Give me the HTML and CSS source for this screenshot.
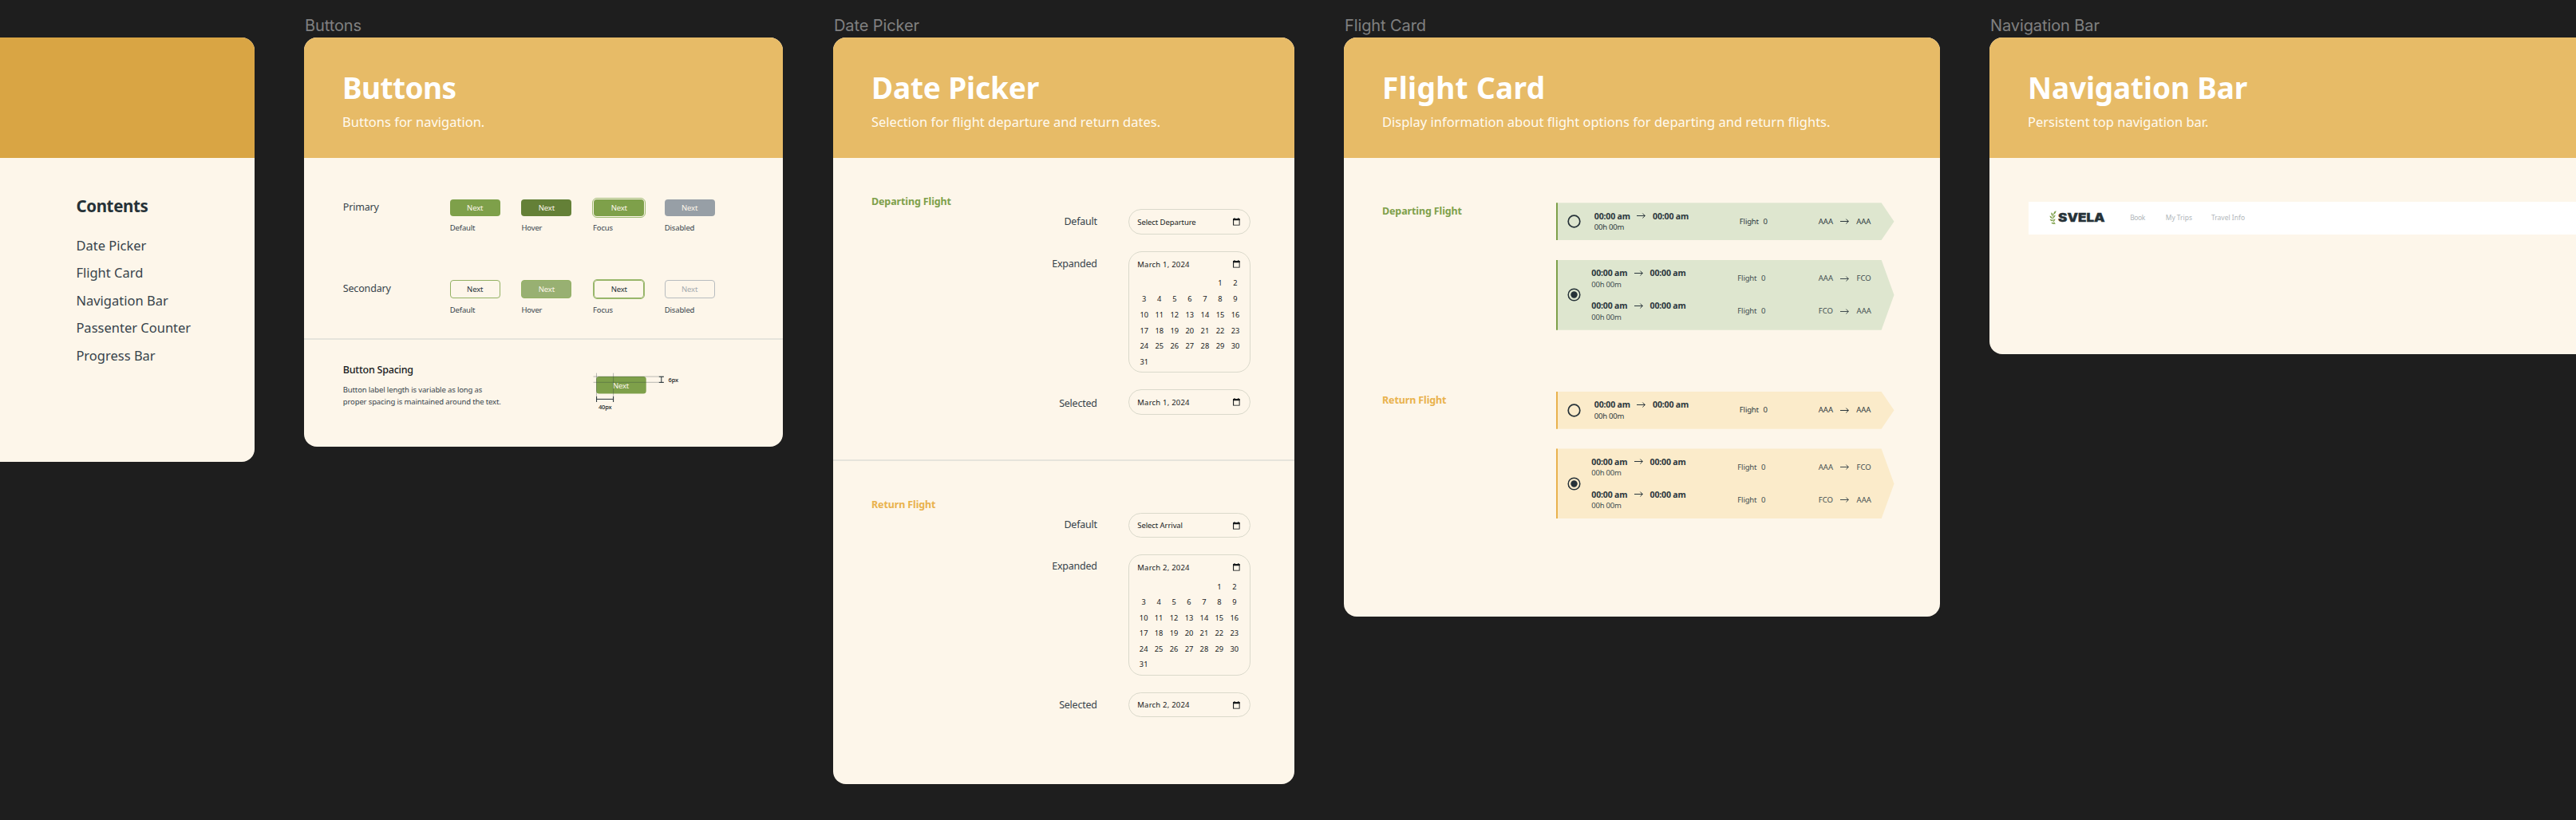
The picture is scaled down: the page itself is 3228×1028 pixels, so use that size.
FILE: index.html
```html
<!DOCTYPE html>
<html lang="en">
<head>
<meta charset="utf-8">
<title>Svela Components</title>
<link rel="stylesheet" href="styles.css">
</head>
<body>
<svg class="defs" width="0" height="0" aria-hidden="true">
  <symbol id="calendar" viewBox="0 0 9 10"><path d="M.6 1.6h7.8v7.8H.6z" fill="none" stroke="currentColor" stroke-width="1.1"/><path d="M.1 1.1h8.8v2.1H.1zM1.5.1h1.1v1.2H1.5zM6.4.1h1.1v1.2H6.4z" fill="currentColor"/></symbol>
  <symbol id="arrow" viewBox="0 0 11 7"><path d="M0 3.5h10.3M7.4.6l2.9 2.9-2.9 2.9" fill="none" stroke="currentColor" stroke-width="1"/></symbol>
  <symbol id="radio" viewBox="0 0 17 17"><circle cx="8.5" cy="8.5" r="7.3" fill="none" stroke="currentColor" stroke-width="1.7"/></symbol>
  <symbol id="radio-on" viewBox="0 0 17 17"><circle cx="8.5" cy="8.5" r="7.3" fill="none" stroke="currentColor" stroke-width="1.5"/><circle cx="8.5" cy="8.5" r="4.2" fill="currentColor"/></symbol>
</svg>
<main class="board">

  <section class="frame">
    <div class="frame-label"></div>
    <div class="card card-cover">
      <header class="card-head head-dark"></header>
      <div class="contents">
        <h2>Contents</h2>
        <ul><li>Date Picker</li><li>Flight Card</li><li>Navigation Bar</li><li>Passenter Counter</li><li>Progress Bar</li></ul>
      </div>
    </div>
  </section>

  <section class="frame">
    <div class="frame-label">Buttons</div>
    <div class="card card-buttons">
      <header class="card-head"><h1 class="tight">Buttons</h1><p>Buttons for navigation.</p></header>
      <div class="btn-rows">
        <div class="btn-row">
          <h3>Primary</h3>
          <div class="state"><span class="btn">Next</span><small>Default</small></div>
          <div class="state"><span class="btn hover">Next</span><small>Hover</small></div>
          <div class="state"><span class="btn focus">Next</span><small>Focus</small></div>
          <div class="state"><span class="btn disabled">Next</span><small>Disabled</small></div>
        </div>
        <div class="btn-row">
          <h3>Secondary</h3>
          <div class="state"><span class="btn second">Next</span><small>Default</small></div>
          <div class="state"><span class="btn second hover">Next</span><small>Hover</small></div>
          <div class="state"><span class="btn second focus">Next</span><small>Focus</small></div>
          <div class="state"><span class="btn second disabled">Next</span><small>Disabled</small></div>
        </div>
      </div>
      <hr>
      <div class="spacing">
        <div class="spacing-text">
          <h3>Button Spacing</h3>
          <p>Button label length is variable as long as<br>proper spacing is maintained around the text.</p>
        </div>
        <svg class="spacing-art" width="110" height="54" viewBox="743 465 110 54">
          <rect x="747.2" y="472" width="62.5" height="21.4" rx="3.5" fill="#7ea04a"/>
          <text x="767.9" y="487" class="art-next">Next</text>
          <g stroke="#263238" stroke-opacity=".45" stroke-width=".7"><path d="M743.5 472.1H832M743.5 479.3H832M747.5 467.7V504M768.6 467.7V504"/></g>
          <g stroke="#263238" stroke-width="1" fill="none"><path d="M747.6 497v7M768.6 497v7M747.6 500.4h21M825.8 472.3h6M825.8 479.4h6M828.8 472.3v7.1"/></g>
          <text x="837.5" y="479.2" class="art-note">6px</text>
          <text x="749.9" y="513" class="art-note">40px</text>
        </svg>
      </div>
    </div>
  </section>

  <section class="frame frame-date">
    <div class="frame-label">Date Picker</div>
    <div class="card card-date">
      <header class="card-head"><h1>Date Picker</h1><p>Selection for flight departure and return dates.</p></header>
      <div class="picker-section">
        <h3 class="green">Departing Flight</h3>
        <div class="picker-rows">
          <div class="picker-row"><h4>Default</h4><div class="field"><div class="field-head">Select Departure<svg><use href="#calendar"/></svg></div></div></div>
          <div class="picker-row"><h4>Expanded</h4><div class="field open"><div class="field-head date">March 1, 2024<svg><use href="#calendar"/></svg></div>
            <div class="days"><i></i><i></i><i></i><i></i><i></i><i>1</i><i>2</i><i>3</i><i>4</i><i>5</i><i>6</i><i>7</i><i>8</i><i>9</i><i>10</i><i>11</i><i>12</i><i>13</i><i>14</i><i>15</i><i>16</i><i>17</i><i>18</i><i>19</i><i>20</i><i>21</i><i>22</i><i>23</i><i>24</i><i>25</i><i>26</i><i>27</i><i>28</i><i>29</i><i>30</i><i>31</i></div></div></div>
          <div class="picker-row low"><h4>Selected</h4><div class="field"><div class="field-head date">March 1, 2024<svg><use href="#calendar"/></svg></div></div></div>
        </div>
      </div>
      <hr>
      <div class="picker-section return">
        <h3 class="gold">Return Flight</h3>
        <div class="picker-rows">
          <div class="picker-row"><h4>Default</h4><div class="field"><div class="field-head">Select Arrival<svg><use href="#calendar"/></svg></div></div></div>
          <div class="picker-row"><h4>Expanded</h4><div class="field open"><div class="field-head date">March 2, 2024<svg><use href="#calendar"/></svg></div>
            <div class="days"><i></i><i></i><i></i><i></i><i></i><i>1</i><i>2</i><i>3</i><i>4</i><i>5</i><i>6</i><i>7</i><i>8</i><i>9</i><i>10</i><i>11</i><i>12</i><i>13</i><i>14</i><i>15</i><i>16</i><i>17</i><i>18</i><i>19</i><i>20</i><i>21</i><i>22</i><i>23</i><i>24</i><i>25</i><i>26</i><i>27</i><i>28</i><i>29</i><i>30</i><i>31</i></div></div></div>
          <div class="picker-row low"><h4>Selected</h4><div class="field"><div class="field-head date">March 2, 2024<svg><use href="#calendar"/></svg></div></div></div>
        </div>
      </div>
    </div>
  </section>

  <section class="frame">
    <div class="frame-label">Flight Card</div>
    <div class="card card-flight">
      <header class="card-head"><h1 class="loose">Flight Card</h1><p>Display information about flight options for departing and return flights.</p></header>
      <div class="flights">
        <h3 class="green">Departing Flight</h3>
        <div class="tickets">
          <div class="ticket one">
            <svg class="radio"><use href="#radio"/></svg>
            <div class="legs">
              <div class="leg"><div><div class="times"><b>00:00 am</b><svg><use href="#arrow"/></svg><b>00:00 am</b></div><div class="dur">00h 00m</div></div><div class="num"><span>Flight</span><span>0</span></div><div class="route"><span>AAA</span><svg><use href="#arrow"/></svg><span>AAA</span></div></div>
            </div>
          </div>
          <div class="ticket two">
            <svg class="radio"><use href="#radio-on"/></svg>
            <div class="legs">
              <div class="leg"><div><div class="times"><b>00:00 am</b><svg><use href="#arrow"/></svg><b>00:00 am</b></div><div class="dur">00h 00m</div></div><div class="num"><span>Flight</span><span>0</span></div><div class="route"><span>AAA</span><svg><use href="#arrow"/></svg><span>FCO</span></div></div>
              <div class="leg"><div><div class="times"><b>00:00 am</b><svg><use href="#arrow"/></svg><b>00:00 am</b></div><div class="dur">00h 00m</div></div><div class="num"><span>Flight</span><span>0</span></div><div class="route"><span>FCO</span><svg><use href="#arrow"/></svg><span>AAA</span></div></div>
            </div>
          </div>
        </div>
      </div>
      <div class="flights return">
        <h3 class="gold">Return Flight</h3>
        <div class="tickets">
          <div class="ticket one">
            <svg class="radio"><use href="#radio"/></svg>
            <div class="legs">
              <div class="leg"><div><div class="times"><b>00:00 am</b><svg><use href="#arrow"/></svg><b>00:00 am</b></div><div class="dur">00h 00m</div></div><div class="num"><span>Flight</span><span>0</span></div><div class="route"><span>AAA</span><svg><use href="#arrow"/></svg><span>AAA</span></div></div>
            </div>
          </div>
          <div class="ticket two">
            <svg class="radio"><use href="#radio-on"/></svg>
            <div class="legs">
              <div class="leg"><div><div class="times"><b>00:00 am</b><svg><use href="#arrow"/></svg><b>00:00 am</b></div><div class="dur">00h 00m</div></div><div class="num"><span>Flight</span><span>0</span></div><div class="route"><span>AAA</span><svg><use href="#arrow"/></svg><span>FCO</span></div></div>
              <div class="leg"><div><div class="times"><b>00:00 am</b><svg><use href="#arrow"/></svg><b>00:00 am</b></div><div class="dur">00h 00m</div></div><div class="num"><span>Flight</span><span>0</span></div><div class="route"><span>FCO</span><svg><use href="#arrow"/></svg><span>AAA</span></div></div>
            </div>
          </div>
        </div>
      </div>
    </div>
  </section>

  <section class="frame">
    <div class="frame-label">Navigation Bar</div>
    <div class="card card-nav">
      <header class="card-head"><h1>Navigation Bar</h1><p>Persistent top navigation bar.</p></header>
      <nav class="navbar">
        <svg class="leaf" width="9" height="18" viewBox="0 0 9 18"><path d="M7.6 1C4 5.500 3.500 11.500 7.400 17" fill="none" stroke="#7ea04a" stroke-width=".8"/><g fill="#7ea04a"><path d="M8.600.2C6 1.200 5.200 2.600 5.600 4.600 7.600 3.800 8.400 2.400 8.600.2zM2.600 2.200C1.900 4.400 2.600 6 4.300 6.900 5 5 4.400 3.300 2.600 2.200zM.500 6.500C.700 8.700 1.900 9.900 3.900 10.200 3.700 8 2.500 6.800.500 6.500zM.600 11C1.600 12.800 3 13.500 5 13.200 4.100 11.300 2.600 10.600.6 11zM2.300 15.200C3.600 16.700 5.200 17.200 7.200 16.700 5.900 15 4.300 14.500 2.300 15.200zM7.600 5.500C5.900 6.200 4.900 7.400 4.800 9.200 6.700 8.600 7.500 7.400 7.600 5.500zM7.400 10.200C5.900 10.700 5.200 11.700 5.300 13.300 6.900 12.900 7.500 11.800 7.400 10.200z"/></g></svg>
        <span class="brand">SVELA</span>
        <span class="link book">Book</span>
        <span class="link trips">My Trips</span>
        <span class="link">Travel Info</span>
      </nav>
    </div>
  </section>
</main>
</body>
</html>
```
FILE: styles.css
```css
* { box-sizing: border-box; }
body {
  margin: 0;
  background: #1e1e1e;
  color: #37434a;
  font-family: "Noto Sans", sans-serif;
  overflow: hidden;
}
h1, h2, h3, h4, p, ul { margin: 0; padding: 0; font-weight: 400; }
ul { list-style: none; }
hr { margin: 0; border: 0; height: 2px; background: #e6e4dc; }
i { font-style: normal; }
.defs { display: block; }

.board {
  display: grid;
  grid-template-columns: 319px 600px 579px 747px 900px;
  column-gap: 62px;
  align-items: start;
  width: 3228px;
  height: 1028px;
  overflow: hidden;
}
.frame-date { padding-left: 1px; }
.frame-label {
  height: 47px;
  padding: 20px 0 0 1px;
  font: 20px/24px Inter, sans-serif;
  letter-spacing: -.1px;
  color: #808080;
}
.card { background: #fdf6ea; border-radius: 16px; overflow: hidden; }
.card-cover { height: 532.4px; border-radius: 0 16px 16px 0; }
.card-buttons { height: 513.3px; }
.card-date { height: 935.8px; }
.card-flight { height: 726px; }
.card-nav { height: 397.4px; }

.card-head {
  height: 151px;
  padding: 39.3px 0 0 48px;
  background: #e7bb67;
  color: #fff;
}
.head-dark { background: #d9a544; }
.card-head h1 { font-weight: 700; font-size: 37px; line-height: 48px; letter-spacing: -.15px; }
.card-head h1.tight { letter-spacing: -.57px; }
.card-head h1.loose { letter-spacing: .35px; }
.card-head p { margin-top: 6.7px; font-size: 16.5px; line-height: 24px; color: #fffaf0; white-space: nowrap; }

.contents { padding: 45.5px 0 0 95.4px; color: #263238; }
.contents h2 { font-weight: 700; font-size: 20.5px; line-height: 28px; letter-spacing: -.36px; }
.contents ul { margin-top: 19.3px; font-size: 16.5px; line-height: 34.5px; color: #37434a; }

h3 { font-size: 12.5px; line-height: 18px; letter-spacing: -.17px; }
.green, .gold { font-weight: 700; letter-spacing: -.12px; }
.green { color: #7ea04a; }
.gold { color: #e9b24d; }

.btn-rows { display: flex; flex-direction: column; gap: 58.2px; padding: 51.7px 0 28.6px 48.8px; }
.btn-row { display: grid; grid-template-columns: 134px repeat(4, 89.65px); }
.btn-row h3 { padding-top: 1.8px; }
.state { display: flex; flex-direction: column; align-items: flex-start; }
.state small { margin-top: 7.8px; font-size: 9.5px; line-height: 14px; letter-spacing: -.15px; }
.btn {
  width: 62.8px;
  height: 21.7px;
  padding-top: .5px;
  border-radius: 4px;
  background: #7ea04a;
  color: #fdf6ea;
  font-size: 9.5px;
  line-height: 21.4px;
  letter-spacing: -.15px;
  text-align: center;
}
.btn.hover { background: #648037; }
.btn.focus { margin-left: 1.3px; outline: 1.2px solid #a0bb74; outline-offset: 1px; }
.btn.disabled { background: #979fa6; }
.btn.second { height: 22.4px; border: 1.4px solid #93b163; background: none; color: #263238; line-height: 19.4px; }
.btn.second.hover { background: #98b072; color: #fdf6ea; }
.btn.second.focus { outline-color: #9cba70; outline-offset: .4px; outline-width: 1.6px; }
.btn.second.disabled { border-color: #b7bcbf; color: #a5abaf; }

.spacing { display: grid; grid-template-columns: 314px 110px; padding-left: 48px; }
.spacing-text { padding: 28.6px 0 0 .8px; }
.spacing-text h3 { font-weight: 500; letter-spacing: -.22px; color: #16191b; }
.spacing-text p { margin-top: 8px; font-size: 9.5px; line-height: 15px; letter-spacing: -.14px; white-space: nowrap; }
.spacing-art { margin-top: 39px; }
.art-next { font-size: 9.5px; letter-spacing: -.15px; fill: #fdf6ea; }
.art-note { font-size: 7.5px; letter-spacing: -.15px; fill: #16191b; font-weight: 500; }

.picker-section { display: flex; justify-content: space-between; height: 378.4px; padding: 45.8px 55.1px 0 48px; }
.picker-rows { display: flex; flex-direction: column; gap: 20.9px; padding-top: 18.5px; }
.picker-row { display: grid; grid-template-columns: 80px 153.4px; column-gap: 38.7px; align-items: start; }
.picker-row h4 { padding-top: 6.8px; font-size: 12.5px; line-height: 18px; letter-spacing: -.22px; text-align: right; }
.picker-row.low h4 { padding-top: 9px; }
.field { height: 32px; border: 1px solid #dad9cb; border-radius: 17px; padding: 0 10px 0 9.7px; color: #16191b; }
.field.open { height: 152.3px; }
.field-head {
  display: flex;
  align-items: center;
  justify-content: space-between;
  height: 30px;
  padding: 0 2px 0 1.1px;
  font-size: 9.5px;
  letter-spacing: -.08px;
}
.field-head.date { letter-spacing: .2px; }
.field-head svg { width: 8.8px; height: 9.8px; }
.days { display: grid; grid-template-columns: repeat(7, 19.05px); margin-top: -.8px; font-size: 9.3px; line-height: 19.75px; text-align: center; }
.return .field { height: 31.5px; }
.return .field.open { height: 151.5px; }
.return .days { grid-template-columns: repeat(7, 18.95px); margin-left: -.5px; line-height: 19.5px; }
.picker-section.return { padding-top: 46.1px; }
.return h4 { padding-top: 5.6px; }
.return .low h4 { padding-top: 7.4px; }

.flights { display: grid; grid-template-columns: 218px 423.5px; padding: 56.3px 0 0 48px; }
.flights.return { padding-top: 77.3px; }
.flights h3 { padding-top: 2.1px; }
.tickets { display: flex; flex-direction: column; gap: 24.8px; }
.ticket {
  display: flex;
  align-items: center;
  padding-left: 11.5px;
  border-left: 2.3px solid #7ea04a;
  background: #dee6cf;
  color: #2b373d;
  clip-path: polygon(0 0, 407.6px 0, 100% 50%, 407.6px 100%, 0 100%);
}
.return .ticket { border-color: #e9b24d; background: #fbebca; }
.one { height: 46.7px; }
.two { height: 87.9px; }
.radio { width: 17px; height: 17px; color: #263238; }
.legs { display: flex; flex-direction: column; gap: 12.4px; }
.leg { display: grid; align-items: center; font-size: 9.5px; line-height: 14px; }
.one .legs { padding-left: 17.3px; }
.one .leg { grid-template-columns: 182px 99px 65.6px; }
.two .legs { padding-left: 13.8px; color: #414d50; }
.two .leg { grid-template-columns: 183px 101.500px 66px; }
.times { display: flex; align-items: center; gap: 8.6px; height: 14.6px; font-size: 10.5px; letter-spacing: -.15px; color: #2b373d; }
.times svg, .route svg { width: 11px; height: 7px; }
.dur { letter-spacing: -.24px; }
.num { display: flex; gap: 5.5px; letter-spacing: -.15px; }
.route { display: flex; align-items: center; justify-content: space-between; }

.navbar {
  display: flex;
  align-items: center;
  height: 40.7px;
  margin: 55px 0 0 49px;
  padding-left: 25.7px;
  background: #fff;
}
.brand {
  width: 100.5px;
  margin-left: 2px;
  font: 900 14px/20px Inter, sans-serif;
  color: #263238;
  transform: scaleX(1.22);
  transform-origin: left;
  -webkit-text-stroke: .3px #263238;
}
.leaf { flex: none; }
.link { margin-right: 24px; font-size: 8.5px; line-height: 14px; color: #b0b6ba; }
.brand { margin-right: -10px; }
.book { letter-spacing: -.45px; margin-right: 26px; }
.trips { letter-spacing: -.05px; }
```
